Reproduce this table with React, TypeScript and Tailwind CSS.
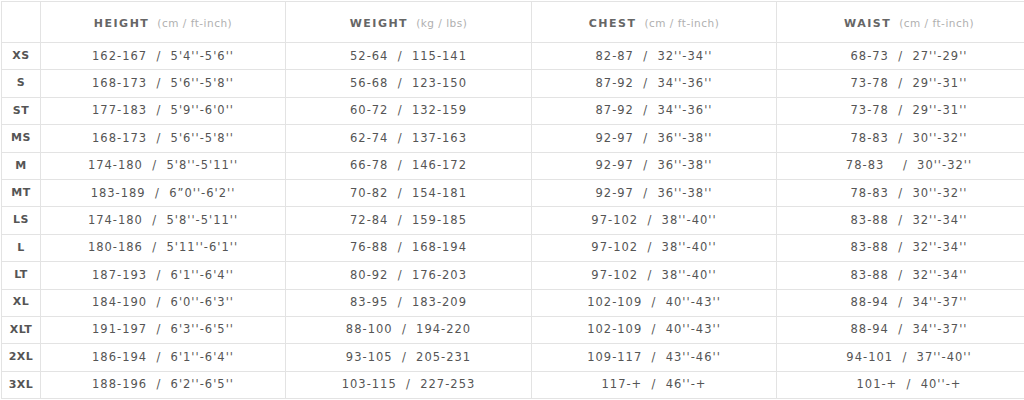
const rows: [string, string, string, string, string][] = [
  ['XS', "162-167  /  5'4''-5'6''", '52-64  /  115-141', "82-87  /  32''-34''", "68-73  /  27''-29''"],
  ['S', "168-173  /  5'6''-5'8''", '56-68  /  123-150', "87-92  /  34''-36''", "73-78  /  29''-31''"],
  ['ST', "177-183  /  5'9''-6'0''", '60-72  /  132-159', "87-92  /  34''-36''", "73-78  /  29''-31''"],
  ['MS', "168-173  /  5'6''-5'8''", '62-74  /  137-163', "92-97  /  36''-38''", "78-83  /  30''-32''"],
  ['M', "174-180  /  5'8''-5'11''", '66-78  /  146-172', "92-97  /  36''-38''", "78-83    /  30''-32''"],
  ['MT', "183-189  /  6\u201d0''-6'2''", '70-82  /  154-181', "92-97  /  36''-38''", "78-83  /  30''-32''"],
  ['LS', "174-180  /  5'8''-5'11''", '72-84  /  159-185', "97-102  /  38''-40''", "83-88  /  32''-34''"],
  ['L', "180-186  /  5'11''-6'1''", '76-88  /  168-194', "97-102  /  38''-40''", "83-88  /  32''-34''"],
  ['LT', "187-193  /  6'1''-6'4''", '80-92  /  176-203', "97-102  /  38''-40''", "83-88  /  32''-34''"],
  ['XL', "184-190  /  6'0''-6'3''", '83-95  /  183-209', "102-109  /  40''-43''", "88-94  /  34''-37''"],
  ['XLT', "191-197  /  6'3''-6'5''", '88-100  /  194-220', "102-109  /  40''-43''", "88-94  /  34''-37''"],
  ['2XL', "186-194  /  6'1''-6'4''", '93-105  /  205-231', "109-117  /  43''-46''", "94-101  /  37''-40''"],
  ['3XL', "188-196  /  6'2''-6'5''", '103-115  /  227-253', "117-+  /  46''-+", "101-+  /  40''-+"],
];

const headers = [
  { label: 'HEIGHT', unit: '(cm / ft-inch)' },
  { label: 'WEIGHT', unit: '(kg / lbs)' },
  { label: 'CHEST', unit: '(cm / ft-inch)' },
  { label: 'WAIST', unit: '(cm / ft-inch)' },
];

export default function App() {
  return (
    <div
      className="w-[1024px] h-[400px] overflow-hidden bg-white pl-px pt-px"
      style={{ fontFamily: '"DejaVu Sans", sans-serif' }}
    >
      <table className="border-collapse table-fixed w-[1040px]">
        <colgroup>
          <col className="w-[39px]" />
          <col className="w-[245px]" />
          <col className="w-[246px]" />
          <col className="w-[245px]" />
          <col className="w-[265px]" />
        </colgroup>
        <thead>
          <tr className="h-[41px]">
            <th className="border border-[#e3e3e3]" />
            {headers.map((h) => (
              <th key={h.label} className="border border-[#e3e3e3] font-normal text-center">
                <span className="text-[11px] font-semibold tracking-[1.5px] text-[#666]">{h.label}</span>
                <span className="ml-[8px] text-[10.5px] tracking-[0.5px] text-[#b0b0b0]">{h.unit}</span>
              </th>
            ))}
          </tr>
        </thead>
        <tbody>
          {rows.map((r) => (
            <tr key={r[0]} className="h-[27.4px]">
              <td className="border border-[#e3e3e3] text-center text-[11px] font-bold text-[#555] tracking-[0.5px]">
                {r[0]}
              </td>
              {r.slice(1).map((v, i) => (
                <td
                  key={i}
                  className="border border-[#e3e3e3] text-center whitespace-pre text-[11.5px] tracking-[1px] text-[#555]"
                >
                  {v}
                </td>
              ))}
            </tr>
          ))}
        </tbody>
      </table>
    </div>
  );
}
